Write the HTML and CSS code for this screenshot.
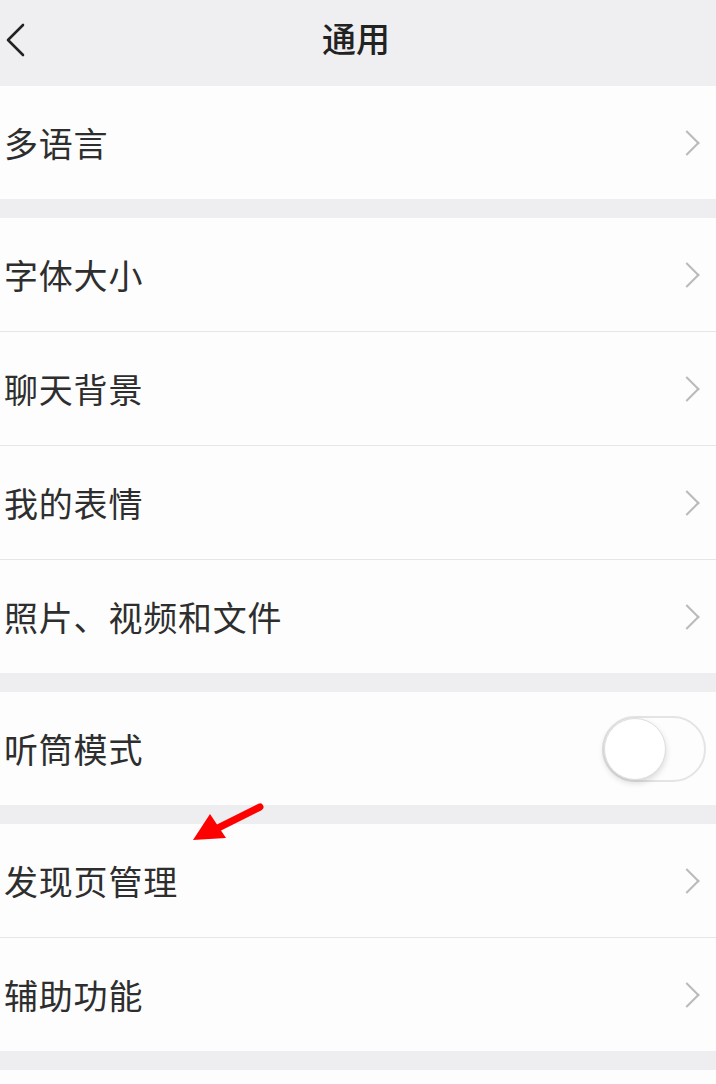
FILE: index.html
```html
<!DOCTYPE html>
<html lang="zh-CN">
<head>
  <meta charset="UTF-8">
  <meta name="viewport" content="width=device-width, initial-scale=1.0">
  <title>通用</title>
  <link rel="stylesheet" href="styles.css">
</head>
<body>
  <div class="page">
    <div class="top-bar">
      <span class="back">
        <svg width="22" height="36" viewBox="0 0 22 36"><path d="M19 3 L4 18 L19 33" fill="none" stroke="#222" stroke-width="2.6" stroke-linecap="round" stroke-linejoin="round"/></svg>
      </span>
      <h1 class="title">通用</h1>
    </div>

    <div class="group">
      <div class="row"><span class="label">多语言</span><span class="arrow"></span></div>
    </div>

    <div class="group">
      <div class="row"><span class="label">字体大小</span><span class="arrow"></span></div>
      <div class="row"><span class="label">聊天背景</span><span class="arrow"></span></div>
      <div class="row"><span class="label">我的表情</span><span class="arrow"></span></div>
      <div class="row"><span class="label">照片、视频和文件</span><span class="arrow"></span></div>
    </div>

    <div class="group">
      <div class="row"><span class="label">听筒模式</span><span class="switch"><span class="knob"></span></span></div>
    </div>

    <div class="group">
      <div class="row"><span class="label">发现页管理</span><span class="arrow"></span></div>
      <div class="row"><span class="label">辅助功能</span><span class="arrow"></span></div>
    </div>

    <div class="group group-last"></div>

    <!-- 标注用的红色箭头 -->
    <svg class="pointer" width="80" height="46" viewBox="0 0 80 46">
      <path d="M68 7 L24 29" stroke="#ff0000" stroke-width="7" stroke-linecap="round" fill="none"/>
      <polygon points="1,40 18,14 34,38" fill="#ff0000"/>
    </svg>
  </div>
</body>
</html>
```

FILE: styles.css
```css
body {
  margin: 0;
  padding: 0;
  background-color: #eeeef0;
  font-family: "Noto Sans CJK SC", "Noto Sans", sans-serif;
  color: #2b2b2b;
}

.page {
  width: 716px;
  position: relative; /* 箭头的定位用 */
}

.top-bar {
  height: 86px;
  background-color: #efeff1;
  display: flex;
  justify-content: center;
  align-items: flex-start;
  position: relative;
}

.back {
  position: absolute;
  left: 4px;
  top: 22px;
}

.title {
  margin: 15px 0 0 -4px;
  font-size: 34px;
  font-weight: 500;
  line-height: 46px;
  color: #222;
}

.group {
  background-color: #fdfdfd;
  margin-bottom: 19px;
}

.group-last {
  height: 14px;
  margin-bottom: 0;
}

.row {
  height: 113px;
  display: flex;
  align-items: center;
  justify-content: space-between;
  padding: 0 10px 0 4px;
  border-top: 1px solid #e6e6e8;
  box-sizing: border-box;
}

.row:first-child {
  border-top: none;
}

.group .row + .row {
  height: 114px;
}

.label {
  font-size: 34px;
  line-height: 40px;
  letter-spacing: 0.8px;
  color: #2e2e2e;
}

.arrow {
  width: 16px;
  height: 16px;
  margin-right: 10px;
  border-top: 2px solid #bababa;
  border-right: 2px solid #bababa;
  transform: rotate(45deg);
}

.switch {
  width: 100px;
  height: 62px;
  border: 2px solid #e4e4e4;
  border-radius: 33px;
  background-color: #fdfdfd;
  position: relative;
  box-sizing: content-box;
}

.knob {
  position: absolute;
  left: 0;
  top: 0;
  width: 60px;
  height: 60px;
  border-radius: 50%;
  background-color: #fff;
  border: 1px solid #dedede;
  box-shadow: 0 3px 6px rgba(0, 0, 0, 0.15);
}

.pointer {
  position: absolute;
  left: 192px;
  top: 800px;
}
```
